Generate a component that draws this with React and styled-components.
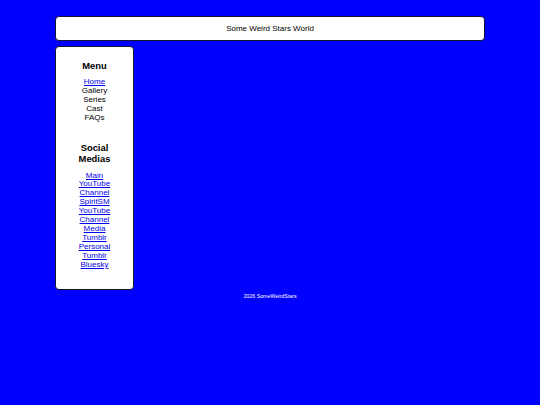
import React from "react";
import styled, { createGlobalStyle } from "styled-components";

const Global = createGlobalStyle`
  html, body { margin: 0; padding: 0; background: #0000ff; }
  body { font-family: "Liberation Sans", Arial, sans-serif; }
`;

const Page = styled.div`
  width: 430px;
  margin: 0 auto;
  padding-top: 16px;
  display: flex;
  flex-direction: column;
`;

const Header = styled.header`
  box-sizing: border-box;
  height: 24.5px;
  background: #fff;
  border: 1.5px solid #14142e;
  border-radius: 4px;
  display: flex;
  align-items: center;
  justify-content: center;
  font-size: 8px;
  color: #000;
`;

const Main = styled.div`
  display: flex;
  margin-top: 5px;
`;

const Sidebar = styled.nav`
  box-sizing: border-box;
  width: 79px;
  height: 244px;
  background: #fff;
  border: 1.5px solid #14142e;
  border-radius: 4px;
  display: flex;
  flex-direction: column;
  align-items: center;
  padding-top: 13px;
  text-align: center;
`;

const Heading = styled.h3`
  margin: 0;
  font-size: 9.4px;
  line-height: 11px;
  font-weight: bold;
  color: #000;
  margin-top: ${(p) => p.$top || 0}px;
`;

const List = styled.div`
  display: flex;
  flex-direction: column;
  align-items: center;
  margin-top: ${(p) => p.$top}px;
  font-size: 8px;
  line-height: ${(p) => p.$lh}px;
`;

const Link = styled.a`
  color: #0000ee;
  text-decoration: underline;
  text-underline-offset: 1px;
`;

const Plain = styled.span`
  color: #000;
`;

const Footer = styled.footer`
  text-align: center;
  color: #fff;
  font-size: 5.3px;
  margin-top: 3px;
`;

export default function App() {
  const socials = ["Main", "YouTube", "Channel", "SpiritSM", "YouTube", "Channel", "Media", "Tumblr", "Personal", "Tumblr", "Bluesky"];
  return (
    <>
      <Global />
      <Page>
        <Header>Some Weird Stars World</Header>
        <Main>
          <Sidebar>
            <Heading>Menu</Heading>
            <List $top={6.5} $lh={9}>
              <Link href="#">Home</Link>
              <Plain>Gallery</Plain>
              <Plain>Series</Plain>
              <Plain>Cast</Plain>
              <Plain>FAQs</Plain>
            </List>
            <Heading $top={20}>Social<br />Medias</Heading>
            <List $top={7.5} $lh={8.9}>
              {socials.map((s, i) => (
                <Link key={i} href="#">{s}</Link>
              ))}
            </List>
          </Sidebar>
        </Main>
        <Footer>2026 SomeWeirdStars</Footer>
      </Page>
    </>
  );
}
